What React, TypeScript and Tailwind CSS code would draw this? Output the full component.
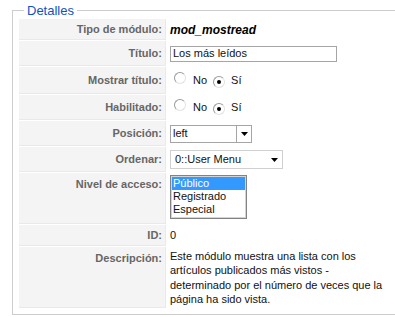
import React from 'react';

// ===== SMALL FORM PIECES =====
const Radio: React.FC<{ checked?: boolean }> = ({ checked }) => (
  <span className="relative inline-flex h-[12px] w-[12px] items-center justify-center rounded-full border border-t-[#9a9a9a] border-l-[#9a9a9a] border-b-[#e2e2e2] border-r-[#e2e2e2] bg-white">
    {checked && <span className="h-[4px] w-[4px] rounded-full bg-black" />}
  </span>
);

const Arrow = () => (
  <svg width="7" height="4" viewBox="0 0 7 4">
    <path d="M0 0h7L3.5 4z" fill="#000" />
  </svg>
);

interface Row {
  label: string;
  h: string;
  top?: boolean;
  content: React.ReactNode;
}

const rows: Row[] = [
  {
    label: 'Tipo de módulo:',
    h: 'h-[21px]',
    content: <span className="text-[12px] font-bold italic text-black">mod_mostread</span>,
  },
  {
    label: 'Título:',
    h: 'h-[25px]',
    content: (
      <div className="flex h-[16px] w-[167px] items-center border border-[#a5a5a5] bg-white pl-[2px] text-[#111]">
        Los más leídos
      </div>
    ),
  },
  {
    label: 'Mostrar título:',
    h: 'h-[27px]',
    content: (
      <div className="flex items-center text-[#111]">
        <span className="ml-[4px]"><Radio /></span>
        <span className="ml-[7px]">No</span>
        <span className="ml-[6px]"><Radio checked /></span>
        <span className="ml-[6px]">Sí</span>
      </div>
    ),
  },
  {
    label: 'Habilitado:',
    h: 'h-[25px]',
    content: (
      <div className="flex items-center text-[#111]">
        <span className="ml-[4px]"><Radio /></span>
        <span className="ml-[7px]">No</span>
        <span className="ml-[6px]"><Radio checked /></span>
        <span className="ml-[6px]">Sí</span>
      </div>
    ),
  },
  {
    label: 'Posición:',
    h: 'h-[25px]',
    content: (
      <div className="flex h-[18px] w-[82px] items-stretch border border-[#a5a5a5] bg-white text-[#111]">
        <span className="flex flex-1 items-center pl-[2px]">left</span>
        <span className="flex w-[15px] items-center justify-center border-l border-[#a5a5a5]">
          <Arrow />
        </span>
      </div>
    ),
  },
  {
    label: 'Ordenar:',
    h: 'h-[25px]',
    content: (
      <div className="flex h-[19px] w-[113px] items-center justify-between border border-[#d0d0d0] bg-white pl-[4px] pr-[4px] text-[#111]">
        <span>0::User Menu</span>
        <Arrow />
      </div>
    ),
  },
  {
    label: 'Nivel de acceso:',
    h: 'h-[51px]',
    top: true,
    content: (
      <div className="mt-[2px] w-[77px] border border-[#828282] bg-white">
        <div className="border border-[#d4d4d4] pb-[1px] leading-[13px] text-[#111]">
          <div className="bg-[#3399ff] pl-[1px] text-white">Público</div>
          <div className="pl-[1px]">Registrado</div>
          <div className="pl-[1px]">Especial</div>
        </div>
      </div>
    ),
  },
  {
    label: 'ID:',
    h: 'h-[21px]',
    content: <span className="text-[#111]">0</span>,
  },
  {
    label: 'Descripción:',
    h: 'h-[61px]',
    top: true,
    content: (
      <div className="pt-[2px] leading-[14.4px] text-[#111]">
        <div>Este módulo muestra una lista con los</div>
        <div>artículos publicados más vistos -</div>
        <div>determinado por el número de veces que la</div>
        <div>página ha sido vista.</div>
      </div>
    ),
  },
];

const App: React.FC = () => {
  return (
    <div className="h-[317px] w-[395px] overflow-hidden bg-white font-['Liberation_Sans',Arial,sans-serif] text-[11px]">
      <fieldset className="ml-[12px] mt-[3px] w-[420px] border border-[#cccccc] px-[6px] pb-[6px] pt-[1px]">
        <legend className="ml-[5px] px-[3px] text-[13px] leading-[15px] text-[#0b55c4]">Detalles</legend>
        <div className="flex flex-col gap-px">
          {rows.map((row) => (
            <div key={row.label} className={`flex ${row.h}`}>
              <div
                className={`flex w-[147px] shrink-0 justify-end border-b border-r border-[#e9e9e9] bg-[#f4f4f4] pr-[3px] font-bold text-[#666] ${
                  row.top ? 'items-start pt-[3px]' : 'items-center'
                }`}
              >
                {row.label}
              </div>
              <div className={`ml-px flex flex-1 pl-[3px] ${row.top ? 'items-start' : 'items-center'}`}>
                {row.content}
              </div>
            </div>
          ))}
        </div>
      </fieldset>
    </div>
  );
};

export default App;
